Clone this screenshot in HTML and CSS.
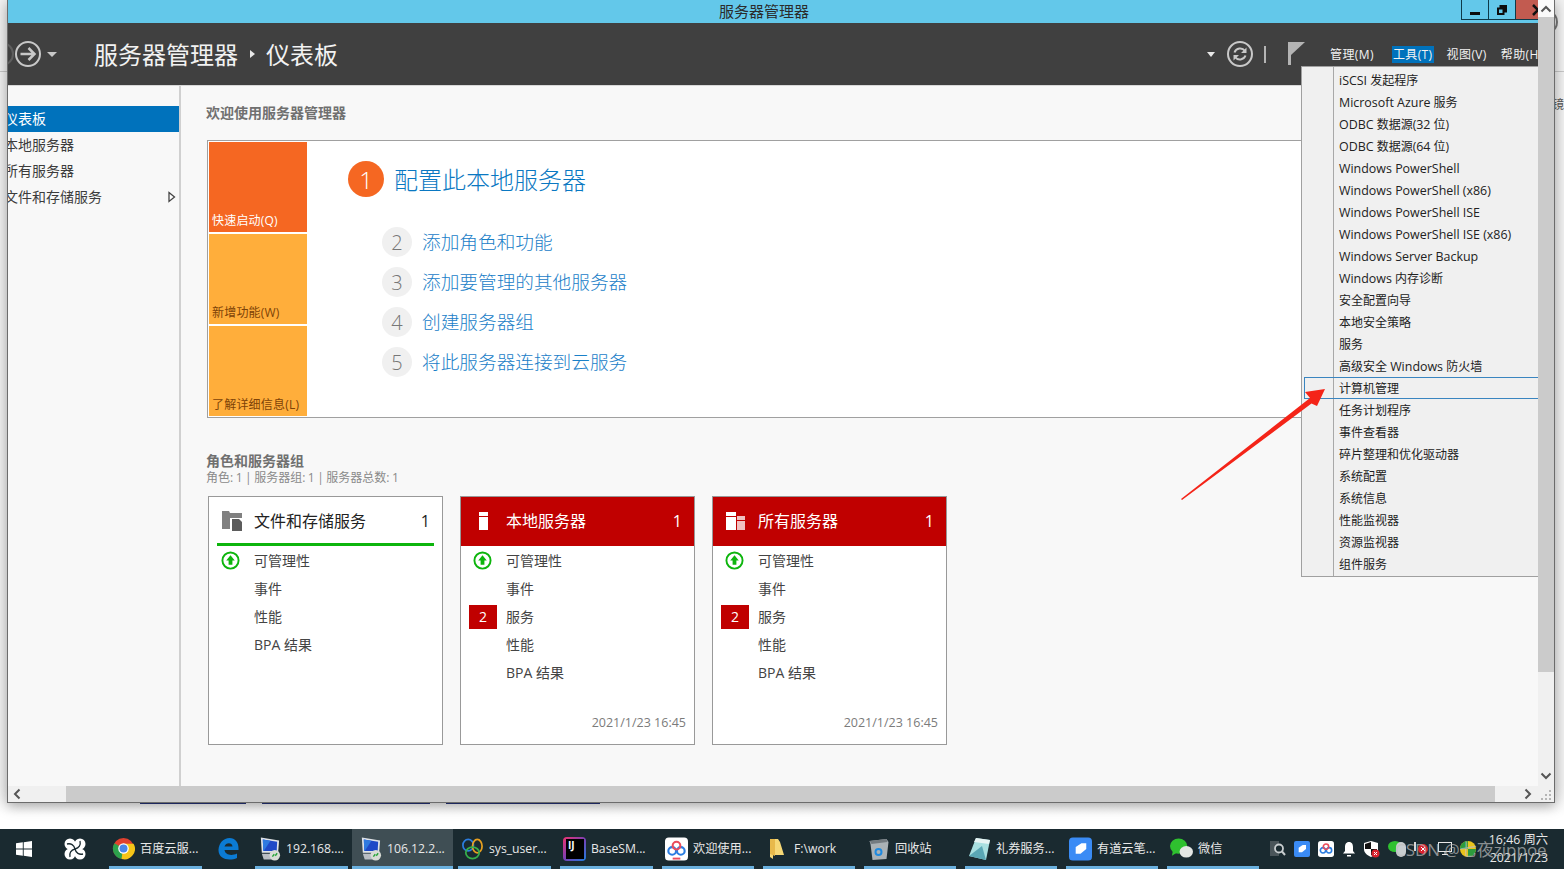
FILE: index.html
```html
<!DOCTYPE html>
<html lang="zh-CN">
<head>
<meta charset="utf-8">
<title>服务器管理器</title>
<link rel="stylesheet" href="styles.css">
</head>
<body>
<svg class="defs" width="0" height="0" aria-hidden="true">
  <defs>
    <symbol id="ok" viewBox="0 0 20 20">
      <circle cx="10" cy="10" r="8.500" fill="#fff" stroke="#0db50d" stroke-width="2"/>
      <path d="M10 4.500 14.500 10H12v4.500H8V10H5.500z" fill="#0db50d"/>
    </symbol>
    <symbol id="rdp" viewBox="0 0 24 26">
      <path d="M3 1 22 4 21 17 4 17z" fill="#dfe3e8"/>
      <path d="M5 3 20 5.500 19.500 15 5.500 15z" fill="#1f49c7"/>
      <path d="M5 3 13 4.300 6 15H5.500z" fill="#2f7ae0"/>
      <path d="M4 18h15l2 6H6z" fill="#b9bec4"/>
      <circle cx="17.500" cy="19.500" r="5.500" fill="#d9dcd6"/>
      <path d="M15 21l2-2.500M18 20l2-2.500" stroke="#29a53a" stroke-width="1.500"/>
    </symbol>
  </defs>
</svg>
<div class="desk">
  <span class="peek-ring"></span>
  <span class="peek-char">镜</span>
  <div class="link-strip">
    <span class="link-a"></span><span class="link-b"></span><span class="link-c"></span>
  </div>
  <div class="window">
    <div class="win-top">
      <div class="app">
        <div class="titlebar">
          <span class="app-title">服务器管理器</span>
          <div class="win-btns">
            <span class="wbtn"><svg width="12" height="12" viewBox="0 0 12 12"><rect x="1" y="8" width="10" height="3" fill="#0c0c0c"/></svg></span>
            <span class="wbtn"><svg width="12" height="12" viewBox="0 0 12 12"><path d="M3.500 1h7.500v7.500H8.500V11H1V3.500h2.500zM3 5.500v3.500h3.500V5.500z" fill="#0c0c0c" fill-rule="evenodd"/></svg></span>
            <span class="wbtn wclose"><svg width="12" height="12" viewBox="0 0 12 12"><path d="M1 1l10 10M11 1 1 11" stroke="#111" stroke-width="2.500"/></svg></span>
          </div>
        </div>
        <header class="topbar">
          <span class="back-ghost"></span>
          <svg class="nav-fwd" width="28" height="28" viewBox="0 0 28 28"><circle cx="14" cy="14" r="12" fill="none" stroke="#c8c8c8" stroke-width="2"/><path d="M6.500 14H20M14.500 8l6 6-6 6" fill="none" stroke="#c8c8c8" stroke-width="2.500"/></svg>
          <span class="tri tri-nav"></span>
          <span class="crumb">服务器管理器</span>
          <span class="crumb-sep"></span>
          <span class="crumb">仪表板</span>
          <span class="spacer"></span>
          <span class="tri tri-tool"></span>
          <svg class="refresh" width="28" height="28" viewBox="0 0 28 28"><circle cx="14" cy="14" r="12" fill="none" stroke="#c8c8c8" stroke-width="2"/><path d="M8.500 12.500A6 6 0 0 1 19 11M19.500 15.500A6 6 0 0 1 9 17" fill="none" stroke="#c8c8c8" stroke-width="2"/><path d="M20.500 7.500V13H15zM7.500 20.500V15H13z" fill="#c8c8c8"/></svg>
          <span class="bar"></span>
          <svg class="flag" width="18" height="24" viewBox="0 0 18 24"><rect x="1" y="1" width="3" height="23" fill="#b4b4b4"/><path d="M4 1H18L4 14z" fill="#b4b4b4"/></svg>
          <nav class="menubar">
            <span class="mb mb-first">管理(M)</span>
            <span class="mb mb-on">工具(T)</span>
            <span class="mb">视图(V)</span>
            <span class="mb">帮助(H)</span>
          </nav>
        </header>
        <div class="content">
          <aside class="sidebar">
            <div class="side-item side-on">仪表板</div>
            <div class="side-item">本地服务器</div>
            <div class="side-item">所有服务器</div>
            <div class="side-item">文件和存储服务<svg class="side-arrow" width="8" height="12" viewBox="0 0 8 12"><path d="M1 1.500 6.500 6 1 10.500z" fill="#fff" stroke="#444" stroke-width="1.300"/></svg></div>
          </aside>
          <main class="main">
            <h1 class="welcome">欢迎使用服务器管理器</h1>
            <section class="quick">
              <div class="tiles">
                <div class="tile tile-on">快速启动(Q)</div>
                <div class="tile">新增功能(W)</div>
                <div class="tile">了解详细信息(L)</div>
              </div>
              <div class="steps">
                <div class="step-main"><span class="num-big">1</span><span class="step-big">配置此本地服务器</span></div>
                <div class="step"><span class="num">2</span><span class="step-text">添加角色和功能</span></div>
                <div class="step"><span class="num">3</span><span class="step-text">添加要管理的其他服务器</span></div>
                <div class="step"><span class="num">4</span><span class="step-text">创建服务器组</span></div>
                <div class="step"><span class="num">5</span><span class="step-text">将此服务器连接到云服务</span></div>
              </div>
            </section>
            <h2 class="sec-title">角色和服务器组</h2>
            <p class="sec-sub">角色: 1 | 服务器组: 1 | 服务器总数: 1</p>
            <div class="cards">
              <article class="card">
                <div class="card-head head-ok">
                  <svg class="card-ico" width="22" height="20" viewBox="0 0 22 20"><path d="M1 0h7l1 2h12v13H10v3H1z" fill="#808080"/><path d="M9 7h13v13H9z" fill="#fff"/><path d="M11 8h7l3 3v9H11z" fill="#5c5c5c"/></svg>
                  <span class="card-name">文件和存储服务</span><span class="card-count">1</span>
                </div>
                <div class="row"><svg class="ok" width="19" height="19"><use href="#ok"/></svg>可管理性</div>
                <div class="row">事件</div>
                <div class="row">性能</div>
                <div class="row">BPA 结果</div>
              </article>
              <article class="card">
                <div class="card-head head-bad">
                  <svg class="card-ico" width="22" height="20" viewBox="0 0 22 20"><rect x="6" y="1" width="9" height="4" fill="#fff"/><rect x="6" y="6" width="9" height="13" fill="#fff"/></svg>
                  <span class="card-name">本地服务器</span><span class="card-count">1</span>
                </div>
                <div class="row"><svg class="ok" width="19" height="19"><use href="#ok"/></svg>可管理性</div>
                <div class="row">事件</div>
                <div class="row"><span class="badge">2</span>服务</div>
                <div class="row">性能</div>
                <div class="row">BPA 结果</div>
                <div class="stamp">2021/1/23 16:45</div>
              </article>
              <article class="card">
                <div class="card-head head-bad">
                  <svg class="card-ico" width="22" height="20" viewBox="0 0 22 20"><rect x="1" y="1" width="10" height="4" fill="#fff"/><rect x="1" y="6" width="10" height="13" fill="#fff"/><rect x="12" y="5" width="8" height="4" fill="#f0c0c0"/><rect x="12" y="10" width="8" height="9" fill="#f0c0c0"/></svg>
                  <span class="card-name">所有服务器</span><span class="card-count">1</span>
                </div>
                <div class="row"><svg class="ok" width="19" height="19"><use href="#ok"/></svg>可管理性</div>
                <div class="row">事件</div>
                <div class="row"><span class="badge">2</span>服务</div>
                <div class="row">性能</div>
                <div class="row">BPA 结果</div>
                <div class="stamp">2021/1/23 16:45</div>
              </article>
            </div>
          </main>
        </div>
        <ul class="tools-menu">
          <li><span class="en">iSCSI</span> 发起程序</li>
          <li><span class="en">Microsoft Azure</span> 服务</li>
          <li><span class="en">ODBC</span> 数据源(<span class="en">32</span> 位)</li>
          <li><span class="en">ODBC</span> 数据源(<span class="en">64</span> 位)</li>
          <li><span class="en">Windows PowerShell</span></li>
          <li><span class="en">Windows PowerShell (x86)</span></li>
          <li><span class="en">Windows PowerShell ISE</span></li>
          <li><span class="en">Windows PowerShell ISE (x86)</span></li>
          <li><span class="en">Windows Server Backup</span></li>
          <li><span class="en">Windows</span> 内存诊断</li>
          <li>安全配置向导</li>
          <li>本地安全策略</li>
          <li>服务</li>
          <li>高级安全 <span class="en">Windows</span> 防火墙</li>
          <li class="menu-on">计算机管理</li>
          <li>任务计划程序</li>
          <li>事件查看器</li>
          <li>碎片整理和优化驱动器</li>
          <li>系统配置</li>
          <li>系统信息</li>
          <li>性能监视器</li>
          <li>资源监视器</li>
          <li>组件服务</li>
        </ul>
      </div>
      <div class="vscroll">
        <span class="vs-btn vs-top"><svg width="12" height="8" viewBox="0 0 12 8"><path d="M1.500 6.500 6 2l4.500 4.500" fill="none" stroke="#555" stroke-width="2"/></svg></span>
        <span class="vs-thumb"></span>
        <span class="vs-btn"><svg width="12" height="8" viewBox="0 0 12 8"><path d="M1.500 1.500 6 6l4.500-4.500" fill="none" stroke="#555" stroke-width="2"/></svg></span>
      </div>
    </div>
    <div class="hscroll">
      <span class="hs-btn"><svg width="8" height="12" viewBox="0 0 8 12"><path d="M6.500 1.500 2 6l4.500 4.500" fill="none" stroke="#555" stroke-width="2"/></svg></span>
      <span class="hs-thumb"></span>
      <span class="hs-btn hs-right"><svg width="8" height="12" viewBox="0 0 8 12"><path d="M1.500 1.500 6 6l-4.500 4.500" fill="none" stroke="#555" stroke-width="2"/></svg></span>
      <span class="grip"><svg width="12" height="12" viewBox="0 0 12 12"><path d="M9 1h2v2H9zM5 5h2v2H5zM9 5h2v2H9zM1 9h2v2H1zM5 9h2v2H5zM9 9h2v2H9z" fill="#b5b5b5"/></svg></span>
    </div>
  </div>
</div>
<footer class="taskbar">
  <span class="tb-icon tb-start"><svg width="16" height="16" viewBox="0 0 16 16"><path d="M0 2.300 6.800 1.300V7.500H0zM7.700 1.200 16 0V7.500H7.700zM0 8.400H6.800V14.700L0 13.700zM7.700 8.400H16V16L7.700 14.800z" fill="#fff"/></svg></span>
  <span class="tb-icon tb-fan"><svg width="22" height="22" viewBox="0 0 22 22"><circle cx="6" cy="6" r="5.500" fill="#fff"/><circle cx="16" cy="6" r="5.500" fill="#fff"/><circle cx="6" cy="16" r="5.500" fill="#fff"/><circle cx="16" cy="16" r="5.500" fill="#fff"/><rect x="6" y="6" width="10" height="10" fill="#fff"/><path d="M11 11C10 7 7 5 3 6M11 11C15 10 17 7 16 3M11 11C12 15 15 17 19 16M11 11C7 12 5 15 6 19" fill="none" stroke="#1a2a30" stroke-width="1.300"/></svg></span>
  <div class="task task-w">
    <svg class="ti" width="23" height="23" viewBox="0 0 24 24"><circle cx="12" cy="12" r="11" fill="#e0412f"/><path d="M12 12 10 23A11 11 0 0 1 2.500 6.500z" fill="#2ca24c"/><path d="M12 7H22.500A11 11 0 0 1 10 23z" fill="#f5c518"/><circle cx="12" cy="12" r="5.500" fill="#fff"/><circle cx="12" cy="12" r="4.200" fill="#4a86e8"/></svg>
    <span class="tt">百度云服...</span>
  </div>
  <span class="tb-icon tb-edge"><svg width="21" height="22" viewBox="0 0 21 22"><path d="M.5 11.500C1 5 5.500 0 11.500 0 17.500 0 21 5 20.500 12H6.500C7 16.500 13 18.500 19 15.500V20C11.500 23.500 0 21.500.5 11.500zM6.500 8.500H14.500C14.500 4 7.500 4 6.500 8.500z" fill="#0b7bd4" fill-rule="evenodd"/></svg></span>
  <div class="task task-w"><svg class="ti" width="24" height="26"><use href="#rdp"/></svg><span class="tt">192.168....</span></div>
  <div class="task task-on"><svg class="ti" width="24" height="26"><use href="#rdp"/></svg><span class="tt">106.12.2...</span></div>
  <div class="task task-w">
    <svg class="ti" width="23" height="24" viewBox="0 0 24 24"><ellipse cx="7.500" cy="8" rx="5.500" ry="6" fill="none" stroke="#2b7de0" stroke-width="1.800"/><ellipse cx="17" cy="9" rx="5" ry="7" fill="none" stroke="#e8a020" stroke-width="1.800"/><ellipse cx="12" cy="16" rx="7" ry="6" fill="none" stroke="#36b04a" stroke-width="1.800"/></svg>
    <span class="tt">sys_user...</span>
  </div>
  <div class="task task-w">
    <span class="ij"><span class="ij-text">IJ</span></span>
    <span class="tt">BaseSM...</span>
  </div>
  <div class="task">
    <svg class="ti" width="24" height="24" viewBox="0 0 24 24"><rect width="24" height="24" rx="4" fill="#fff"/><circle cx="7.500" cy="14" r="4" fill="none" stroke="#2a7de1" stroke-width="2.200"/><circle cx="16.500" cy="14" r="4" fill="none" stroke="#2a7de1" stroke-width="2.200"/><circle cx="12" cy="8.500" r="4" fill="none" stroke="#ea4c5c" stroke-width="2.200"/><rect x="8" y="21" width="8" height="2" fill="#ea4c5c"/></svg>
    <span class="tt">欢迎使用...</span>
  </div>
  <div class="task task-folder">
    <svg class="ti-folder" width="14" height="21" viewBox="0 0 14 21"><path d="M0 1H8L10 4 14 17H3V21L0 19z" fill="#f6d775"/><path d="M0 1H5V18L0 16z" fill="#e8b94b"/></svg>
    <span class="tt">F:\work</span>
  </div>
  <div class="task">
    <svg class="ti" width="20" height="22" viewBox="0 0 20 22"><path d="M1 3 18 1 20 4 18 21 4 22 2 6z" fill="#aab2b6"/><path d="M1 3 18 1 19 4 3 6z" fill="#737b80"/><circle cx="10" cy="14" r="3" fill="none" stroke="#1e8ae0" stroke-width="2"/></svg>
    <span class="tt">回收站</span>
  </div>
  <div class="task">
    <svg class="ti" width="23" height="24" viewBox="0 0 23 24"><path d="M8 1 22 3 18 23 1 19z" fill="#a8dfe0"/><path d="M8 1 22 3 21 7 6 5z" fill="#e6f3f3"/><path d="M1 19 14 9 18 23z" fill="#5aa7b5"/></svg>
    <span class="tt">礼券服务...</span>
  </div>
  <div class="task">
    <svg class="ti" width="24" height="24" viewBox="0 0 24 24"><rect width="24" height="24" rx="4" fill="#3a8bf5"/><path d="M7 17V10L13 6H18V12L12 17z" fill="#fff"/></svg>
    <span class="tt">有道云笔...</span>
  </div>
  <div class="task">
    <svg class="ti" width="24" height="21" viewBox="0 0 24 21"><ellipse cx="9" cy="8" rx="9" ry="8" fill="#2fc12f"/><path d="M3 13 2 18 7 15z" fill="#2fc12f"/><ellipse cx="17" cy="14" rx="7" ry="6" fill="#e4e7e4"/></svg>
    <span class="tt">微信</span>
  </div>
  <div class="tray">
    <svg class="tr-search" width="16" height="16" viewBox="0 0 16 16"><rect x="0" y="0" width="9" height="15" fill="#4a555a"/><circle cx="9" cy="7.500" r="4" fill="#1a2a30" stroke="#c8cdcf" stroke-width="1.800"/><path d="M12 10.500 15 14" stroke="#c8cdcf" stroke-width="2"/></svg>
    <svg width="16" height="16" viewBox="0 0 24 24"><rect width="24" height="24" rx="3" fill="#3a8bf5"/><path d="M7 17V10L13 6H18V12L12 17z" fill="#fff"/></svg>
    <svg width="16" height="16" viewBox="0 0 24 24"><rect width="24" height="24" rx="4" fill="#fff"/><circle cx="7.500" cy="14" r="4" fill="none" stroke="#2a7de1" stroke-width="2.400"/><circle cx="16.500" cy="14" r="4" fill="none" stroke="#2a7de1" stroke-width="2.400"/><circle cx="12" cy="8.500" r="4" fill="none" stroke="#ea4c5c" stroke-width="2.400"/></svg>
    <svg width="14" height="16" viewBox="0 0 14 16"><path d="M7 1C4 1 3 3.500 3 6V10L1 12.500H13L11 10V6C11 3.500 10 1 7 1z" fill="#fff"/><path d="M5 14h4v1.500H5z" fill="#fff"/></svg>
    <svg width="16" height="17" viewBox="0 0 16 17"><path d="M7 0 14 2V8C14 12 11 14 7 16 3 14 0 12 0 8V2z" fill="#fff"/><path d="M7 1V8H1V3zM7 8H13C13 11 10 13 7 14.500z" fill="#111"/><circle cx="11.500" cy="12.500" r="4" fill="#d9232e"/><path d="M10 11l3 3M13 11l-3 3" stroke="#fff" stroke-width="1"/></svg>
    <svg class="tr-wx" width="14" height="12" viewBox="0 0 14 12"><ellipse cx="7" cy="5.500" rx="7" ry="5.500" fill="#2fc12f"/></svg>
    <svg class="tr-mouse" width="10" height="15" viewBox="0 0 10 15"><rect width="10" height="15" rx="5" fill="#c8cdcf"/></svg>
    <svg class="tr-tick" width="10" height="15" viewBox="0 0 10 15"><rect x="4" width="2" height="9" fill="#d8d8d8"/></svg>
    <svg class="tr-err" width="10" height="10" viewBox="0 0 10 10"><circle cx="5" cy="5" r="5" fill="#d9232e"/><path d="M3 3l4 4M7 3 3 7" stroke="#fff"/></svg>
    <svg class="tr-mon" width="14" height="14" viewBox="0 0 14 14"><rect x=".5" y=".5" width="13" height="9" fill="none" stroke="#e8e8e8"/><path d="M4 12.500h6M7 10v2" stroke="#e8e8e8"/></svg>
    <svg width="16" height="16" viewBox="0 0 16 16"><circle cx="8" cy="8" r="8" fill="#e9c41c"/><path d="M0 8a8 8 0 0 1 8-8V8z" fill="#2d9b3c"/><path d="M8 16a8 8 0 0 0 8-8H8z" fill="#2d9b3c"/></svg>
  </div>
  <div class="clock"><span>16:46 周六</span><span>2021/1/23</span></div>
</footer>
<svg class="arrow" width="150" height="116" viewBox="1179 387 150 116"><path d="M1181 499 1310 398 1305 392 1325 389 1317 406 1311.500 403.500 1182 500z" fill="#f42418"/></svg>
<div class="watermark">CSDN @七夜zippoe</div>
</body>
</html>
```
FILE: styles.css
```css
* { box-sizing: border-box; }
html, body { margin: 0; padding: 0; }
body {
  position: relative;
  display: flex;
  flex-direction: column;
  width: 1564px;
  height: 869px;
  overflow: hidden;
  background: #fff;
  color: #333;
  font-family: "Open Sans", "Noto Sans CJK SC", sans-serif;
  font-size: 14px;
}
.defs { position: absolute; }
h1, h2, p, ul { margin: 0; padding: 0; }

.desk {
  position: relative;
  height: 829px;
  padding-left: 7px;
  background: linear-gradient(#f2f2f2 0 71px, #c8c8c8 71px 72px, #f2f2f2 72px 786px, #fff 815px);
}
.peek-ring {
  position: absolute;
  left: 1544px;
  top: 12px;
  width: 14px;
  height: 20px;
  border: 2px solid #777;
  border-radius: 50%;
}
.peek-char {
  position: absolute;
  left: 1552px;
  top: 96px;
  font-size: 12px;
  line-height: 18px;
  color: #555;
}
.link-strip {
  position: absolute;
  left: 140px;
  top: 797px;
  display: flex;
  gap: 16px;
}
.link-strip span { height: 7px; background: #27357a; }
.link-a { width: 106px; }
.link-b { width: 168px; }
.link-c { width: 154px; }

.window {
  position: relative;
  display: flex;
  flex-direction: column;
  width: 1548px;
  height: 803px;
  border: 1px solid #6c6c6c;
  border-top: 0;
  background: #f0f0f0;
  box-shadow: 0 3px 12px rgba(0,0,0,.35);
}
.win-top { display: flex; height: 786px; }
.app {
  position: relative;
  display: flex;
  flex-direction: column;
  width: 1530px;
  overflow: hidden;
  background: #f8f8f8;
}

.titlebar {
  position: relative;
  display: flex;
  justify-content: flex-end;
  height: 23px;
  background: #63c8ea;
}
.app-title {
  position: absolute;
  left: 711px;
  top: 0;
  font-size: 15px;
  line-height: 23px;
  color: #2b2b2b;
}
.win-btns { display: flex; height: 20px; margin-right: -9px; }
.wbtn {
  display: flex;
  align-items: center;
  justify-content: center;
  width: 27px;
  border: 1px solid #0e3a49;
  border-top: 0;
  border-right: 0;
}
.wclose { width: 32px; padding-left: 16px; background: #c25b50; justify-content: flex-start; }

.topbar {
  display: flex;
  align-items: center;
  height: 62px;
  background: #404040;
  flex: none;
  position: relative;
}
.back-ghost {
  position: absolute;
  left: -18px;
  top: 19px;
  width: 24px;
  height: 24px;
  border: 2px solid #5e5e5e;
  border-radius: 50%;
}
.nav-fwd { margin-left: 6px; }
.tri {
  width: 0;
  height: 0;
  border-left: 5px solid transparent;
  border-right: 5px solid transparent;
  border-top: 5px solid #c8c8c8;
}
.tri-nav { margin-left: 5px; margin-right: 37px; }
.crumb { padding-top: 2px; font-size: 24px; line-height: 32px; color: #f2f2f2; }
.crumb-sep {
  margin: 0 11px 0 12px;
  border-top: 4px solid transparent;
  border-bottom: 4px solid transparent;
  border-left: 5px solid #e8e8e8;
}
.spacer { flex: 1; }
.tri-tool { border-left-width: 4px; border-right-width: 4px; border-top-color: #e8e8e8; }
.refresh { margin-left: 11px; }
.bar { width: 2px; height: 17px; margin-left: 10px; background: #b4b4b4; }
.flag { margin-left: 21px; margin-top: -3px; flex: none; }
.menubar { display: flex; flex: none; width: 209px; margin-left: 24px; gap: 12px; }
.mb { flex: none; padding: 0 1px; font-size: 12px; letter-spacing: .4px; line-height: 17px; color: #f2f2f2; white-space: nowrap; }
.mb-first { margin-right: 5px; }
.mb-on { background: #0072bc; }

.content { display: flex; flex: 1; min-height: 0; border-top: 1px solid #d8d8d8; }
.sidebar {
  width: 173px;
  flex: none;
  padding-top: 20px;
  border-right: 2px solid #d0d0d0;
  background: #f8f8f8;
  overflow: hidden;
}
.side-item {
  position: relative;
  height: 26px;
  text-indent: -4px;
  font-size: 14px;
  line-height: 26px;
  color: #3c3c3c;
  white-space: nowrap;
}
.side-on { background: #0072bc; color: #fff; }
.side-arrow { position: absolute; right: 3px; top: 7px; }

.main { flex: 1; min-width: 0; padding: 17px 0 0 25px; }
.welcome { font-size: 14px; font-weight: 700; line-height: 20px; color: #707070; margin-bottom: 17px; }
.quick {
  display: flex;
  height: 278px;
  margin-left: 1px;
  padding: 1px;
  border: 1px solid #a0a0a0;
  background: #fff;
}
.tiles { display: flex; flex-direction: column; gap: 2px; width: 98px; flex: none; }
.tile {
  display: flex;
  align-items: flex-end;
  height: 90px;
  padding: 0 0 2px 3px;
  background: #ffae3b;
  font-size: 12px;
  letter-spacing: .2px;
  line-height: 18px;
  color: #7d4207;
  white-space: nowrap;
}
.tile-on { background: #f56722; color: #fff; }
.steps { padding: 19px 0 0 41px; }
.step-main { display: flex; align-items: center; height: 36px; margin-bottom: 30px; }
.num-big {
  display: flex;
  align-items: center;
  justify-content: center;
  width: 36px;
  height: 36px;
  border-radius: 50%;
  background: #f56722;
  color: #fff;
  font-size: 24px;
  font-weight: 300;
}
.step-big { margin: 2px 0 0 10px; font-size: 24px; font-weight: 300; line-height: 36px; color: #0a78c2; }
.step { display: flex; align-items: center; height: 30px; margin: 0 0 10px 34px; }
.num {
  display: flex;
  align-items: center;
  justify-content: center;
  width: 30px;
  height: 30px;
  border-radius: 50%;
  background: #f0f0f0;
  color: #777;
  font-size: 20px;
  font-weight: 300;
}
.step-text { margin-left: 10px; font-size: 18.67px; font-weight: 300; line-height: 30px; color: #1a80c8; }

.sec-title { margin-top: 33px; font-size: 14px; font-weight: 700; line-height: 20px; color: #707070; }
.sec-sub { font-size: 12px; line-height: 14px; word-spacing: -.6px; color: #8a8a8a; }
.cards { display: flex; gap: 17px; margin: 11px 0 0 2px; }
.card {
  display: flex;
  flex-direction: column;
  width: 235px;
  height: 249px;
  border: 1px solid #999;
  background: #fff;
}
.card-head {
  display: flex;
  align-items: center;
  height: 49px;
  margin-bottom: 1px;
  padding: 0 12px 1px 12px;
  flex: none;
}
.head-ok { margin: 0 8px 1px; padding: 2px 4px 0 4px; border-bottom: 3px solid #0db50d; color: #222; }
.head-ok .card-name { margin-left: 11px; }
.head-bad { background: #c00000; color: #fff; }
.card-ico { flex: none; }
.card-name { margin-left: 11px; font-size: 16px; line-height: 24px; }
.card-count { margin-left: auto; font-size: 16px; }
.row {
  position: relative;
  height: 28px;
  padding-left: 45px;
  font-size: 14px;
  line-height: 28px;
  color: #444;
  flex: none;
}
.ok { position: absolute; left: 12px; top: 4px; }
.badge {
  position: absolute;
  left: 8px;
  top: 2px;
  width: 28px;
  height: 24px;
  background: #c00000;
  color: #fff;
  line-height: 24px;
  text-align: center;
}
.stamp { margin-top: auto; padding: 0 8px 13px 0; font-size: 12.500px; line-height: 16px; color: #7b7b7b; text-align: right; }

.tools-menu {
  position: absolute;
  left: 1293px;
  top: 66px;
  width: 240px;
  height: 511px;
  padding: 2px 0 2px 2px;
  border: 1px solid #a0a0a0;
  border-width: 1px 0 1px 1px;
  list-style: none;
  background: linear-gradient(90deg, #f0f0f0 31px, #a8a8a8 31px 32px, #f0f0f0 32px);
}
.tools-menu li {
  height: 22px;
  padding-left: 35px;
  font-size: 12px;
  line-height: 24px;
  color: #222;
  white-space: nowrap;
}
.tools-menu .menu-on {
  border: 1px solid #3a85c0;
  border-right: 0;
  padding-left: 34px;
  line-height: 22px;
}
.en { font-size: 12.450px; }

.vscroll { display: flex; flex-direction: column; width: 16px; background: #f0f0f0; }
.vs-btn { display: flex; align-items: center; justify-content: center; height: 17px; margin-top: auto; padding-bottom: 4px; }
.vs-top { margin-top: 0; background: #fafafa; padding: 0; }
.vs-thumb { height: 655px; background: #cbcbcb; }

.hscroll { position: relative; display: flex; align-items: center; height: 16px; background: #f0f0f0; }
.hs-btn { display: flex; justify-content: center; width: 17px; }
.hs-thumb { width: 1429px; height: 100%; margin-left: 41px; background: #cbcbcb; }
.hs-right { width: 16px; margin-left: 25px; }
.grip { position: absolute; right: 2px; top: 3px; display: flex; }

.taskbar {
  display: flex;
  align-items: center;
  height: 40px;
  background: #1a2a30;
  color: #e8e8e8;
  flex: none;
}
.tb-icon { display: flex; justify-content: center; flex: none; }
.tb-start { width: 16px; margin-left: 16px; }
.tb-fan { width: 22px; margin-left: 32px; margin-right: 23px; }
.tb-edge { width: 33px; margin: 0 10px 0 1px; }
.task {
  display: flex;
  align-items: center;
  height: 40px;
  width: 92px;
  padding: 2px 0 0 3px;
  margin-right: 9px;
  border-bottom: 3px solid #6ab0de;
  flex: none;
}
.task-w { width: 93px; }
.task-on { width: 101px; padding-left: 7px; margin: 0 5px 0 -5px; background: #3f4e54; }
.ti { flex: none; width: 23px; }
.ti-folder { flex: none; }
.tt { margin-left: 5px; font-size: 12.200px; line-height: 18px; white-space: nowrap; }
.task-folder { padding-left: 7px; }
.task-folder .tt { margin-left: 10px; }
.ij {
  position: relative;
  display: flex;
  width: 23px;
  height: 24px;
  padding: 2px 2px 2px 3px;
  background: linear-gradient(135deg, #f0336f, #7a3fb5 50%, #1c7fe0);
  flex: none;
  border-radius: 4px;
}
.ij-text {
  width: 100%;
  background: #000;
  color: #fff;
  font-size: 10px;
  font-weight: 700;
  line-height: 12px;
  padding-left: 2px;
}
.tray {
  position: absolute;
  left: 1270px;
  display: flex;
  align-items: center;
  gap: 8px;
}
.tr-wx { margin-bottom: 4px; }
.tr-mouse { margin-left: -14px; }
.tr-tick { margin-left: -4px; }
.tr-err { margin-left: -10px; }
.tr-mon { margin-left: 2px; }
.clock {
  position: absolute;
  right: 16px;
  display: flex;
  flex-direction: column;
  align-items: flex-end;
  margin-top: -1px;
  font-size: 12.300px;
  line-height: 18px;
  color: #e8e8e8;
}
.arrow { position: absolute; left: 1179px; top: 387px; }
.watermark {
  position: absolute;
  left: 1395px;
  top: 837px;
  font-size: 17px;
  line-height: 26px;
  color: rgba(190,190,190,.7);
  white-space: nowrap;
}
```
